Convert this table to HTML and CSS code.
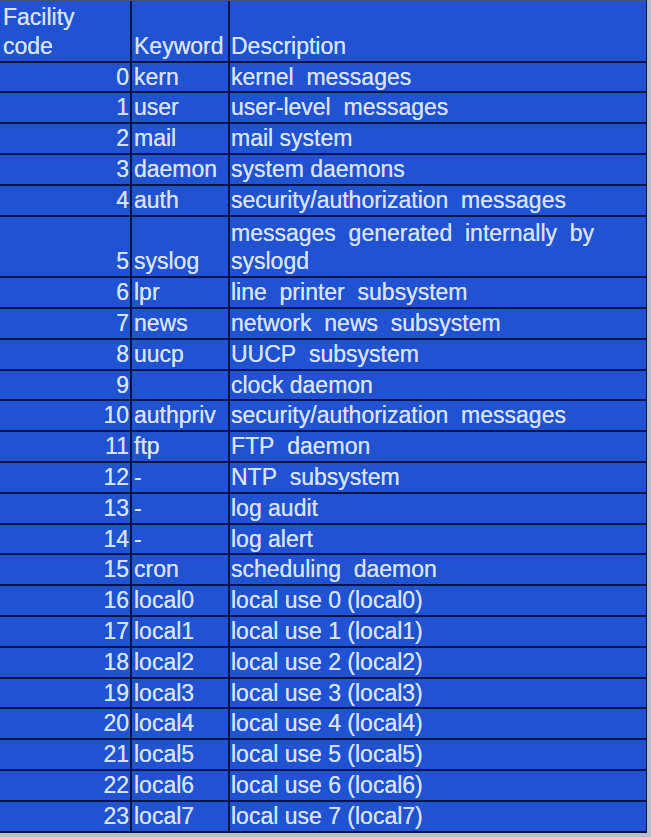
FILE: index.html
```html
<!DOCTYPE html>
<html>
<head>
<meta charset="utf-8">
<link rel="stylesheet" href="styles.css">
</head>
<body>
<div class="tbl">
  <div class="c hdr">Facility<br>code</div><div class="c hdr kw">Keyword</div><div class="c hdr desc">Description</div>
  <div class="c num">0</div><div class="c kw">kern</div><div class="c desc">kernel&nbsp; messages</div>
  <div class="c num">1</div><div class="c kw">user</div><div class="c desc">user-level&nbsp; messages</div>
  <div class="c num">2</div><div class="c kw">mail</div><div class="c desc">mail system</div>
  <div class="c num">3</div><div class="c kw">daemon</div><div class="c desc">system daemons</div>
  <div class="c num">4</div><div class="c kw">auth</div><div class="c desc">security/authorization&nbsp; messages</div>
  <div class="c num dbl">5</div><div class="c kw dbl">syslog</div><div class="c desc dbl">messages&nbsp; generated&nbsp; internally&nbsp; by<br>syslogd</div>
  <div class="c num">6</div><div class="c kw">lpr</div><div class="c desc">line&nbsp; printer&nbsp; subsystem</div>
  <div class="c num">7</div><div class="c kw">news</div><div class="c desc">network&nbsp; news&nbsp; subsystem</div>
  <div class="c num">8</div><div class="c kw">uucp</div><div class="c desc">UUCP&nbsp; subsystem</div>
  <div class="c num">9</div><div class="c kw"></div><div class="c desc">clock daemon</div>
  <div class="c num">10</div><div class="c kw">authpriv</div><div class="c desc">security/authorization&nbsp; messages</div>
  <div class="c num">11</div><div class="c kw">ftp</div><div class="c desc">FTP&nbsp; daemon</div>
  <div class="c num">12</div><div class="c kw">-</div><div class="c desc">NTP&nbsp; subsystem</div>
  <div class="c num">13</div><div class="c kw">-</div><div class="c desc">log audit</div>
  <div class="c num">14</div><div class="c kw">-</div><div class="c desc">log alert</div>
  <div class="c num">15</div><div class="c kw">cron</div><div class="c desc">scheduling&nbsp; daemon</div>
  <div class="c num">16</div><div class="c kw">local0</div><div class="c desc">local use 0 (local0)</div>
  <div class="c num">17</div><div class="c kw">local1</div><div class="c desc">local use 1 (local1)</div>
  <div class="c num">18</div><div class="c kw">local2</div><div class="c desc">local use 2 (local2)</div>
  <div class="c num">19</div><div class="c kw">local3</div><div class="c desc">local use 3 (local3)</div>
  <div class="c num">20</div><div class="c kw">local4</div><div class="c desc">local use 4 (local4)</div>
  <div class="c num">21</div><div class="c kw">local5</div><div class="c desc">local use 5 (local5)</div>
  <div class="c num">22</div><div class="c kw">local6</div><div class="c desc">local use 6 (local6)</div>
  <div class="c num">23</div><div class="c kw">local7</div><div class="c desc">local use 7 (local7)</div>
</div>
</body>
</html>
```

FILE: styles.css
```css
html, body {
  margin: 0;
  padding: 0;
  background: #b9bdc6;
}
.tbl {
  display: grid;
  grid-template-columns: 130px 96px 416px;
  grid-auto-rows: 28.8px;
  gap: 2px;
  width: 646px;
  background: #081646;
  border-top: 1px solid #4a5470;
  border-bottom: 2px solid #081646;
  border-right: 1px solid #081646;
  font-family: "Liberation Sans", Arial, sans-serif;
  font-size: 23px;
  line-height: 28.8px;
  color: #d6e2f8;
  text-shadow: 0 0 0.6px #d6e2f8;
}
.c {
  background: #2052d2;
  display: flex;
  align-items: flex-end;
  white-space: nowrap;
  overflow: hidden;
}
.hdr, .dbl {
  grid-row: span 2;
}
.hdr {
  padding-left: 3px;
}
.num {
  justify-content: flex-end;
  padding-right: 1px;
}
.kw {
  padding-left: 2px;
}
.desc {
  padding-left: 1px;
}
```
